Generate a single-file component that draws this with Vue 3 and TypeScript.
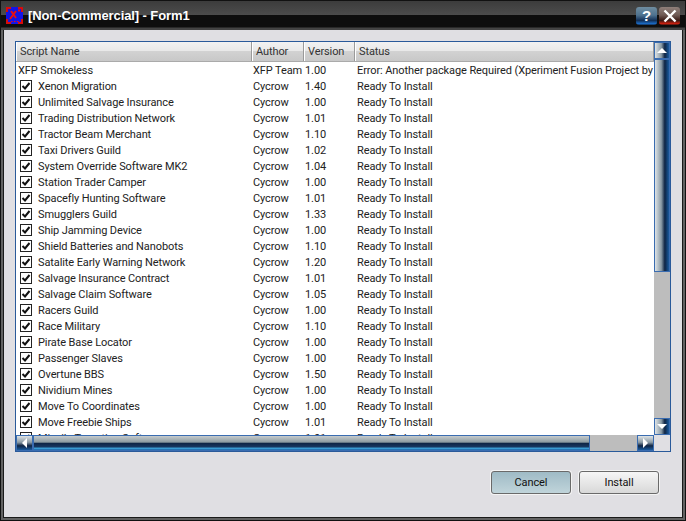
<script setup lang="ts">
interface Row { name: string; author: string; version: string; status: string; check: boolean }
const ready = 'Ready To Install'
const mk = (name: string, version: string): Row => ({ name, author: 'Cycrow', version, status: ready, check: true })
const rows: Row[] = [
  { name: 'XFP Smokeless', author: 'XFP Team', version: '1.00', status: 'Error: Another package Required (Xperiment Fusion Project by Zeron)', check: false },
  mk('Xenon Migration', '1.40'),
  mk('Unlimited Salvage Insurance', '1.00'),
  mk('Trading Distribution Network', '1.01'),
  mk('Tractor Beam Merchant', '1.10'),
  mk('Taxi Drivers Guild', '1.02'),
  mk('System Override Software MK2', '1.04'),
  mk('Station Trader Camper', '1.00'),
  mk('Spacefly Hunting Software', '1.01'),
  mk('Smugglers Guild', '1.33'),
  mk('Ship Jamming Device', '1.00'),
  mk('Shield Batteries and Nanobots', '1.10'),
  mk('Satalite Early Warning Network', '1.20'),
  mk('Salvage Insurance Contract', '1.01'),
  mk('Salvage Claim Software', '1.05'),
  mk('Racers Guild', '1.00'),
  mk('Race Military', '1.10'),
  mk('Pirate Base Locator', '1.00'),
  mk('Passenger Slaves', '1.00'),
  mk('Overtune BBS', '1.50'),
  mk('Nividium Mines', '1.00'),
  mk('Move To Coordinates', '1.00'),
  mk('Move Freebie Ships', '1.01'),
  mk('Missile Targeting Software', '1.01'),
]
</script>

<template>
  <div class="window">
    <header class="titlebar">
      <svg class="appicon" width="17" height="17" viewBox="0 0 17 17">
        <rect width="17" height="17" fill="#1414e6" />
        <path d="M0 0h5v2H2v3H0zM12 0h5v5h-2V2h-3zM0 12h2v3h3v2H0zM15 12h2v5h-5v-2h3z" fill="#d80c0c" />
        <path d="M4 12 L10 4 M5 4 L10 11" stroke="#e81010" stroke-width="2" fill="none" />
        <path d="M12 2.500h2v2h-2zM5 14h1.500v1H5zM8 14h1.500v1H8zM11 14h1.500v1H11z" fill="#e81010" />
      </svg>
      <span class="title">[Non-Commercial] - Form1</span>
      <span class="capbtn help">?</span>
      <span class="capbtn close">
        <svg width="14" height="14" viewBox="0 0 14 14"><path d="M1.500 1.500 L12.500 12.500 M12.500 1.500 L1.500 12.500" stroke="#fff" stroke-width="2.400" /></svg>
      </span>
    </header>
    <main class="client">
      <section class="list">
        <div class="viewport">
          <div class="head grid">
            <div class="hcell">Script Name</div>
            <div class="hcell">Author</div>
            <div class="hcell">Version</div>
            <div class="hcell">Status</div>
          </div>
          <div class="body">
            <div v-for="r in rows" :key="r.name" class="row grid">
              <div class="cell name" :class="{ nocheck: !r.check }">
                <svg v-if="r.check" class="check" width="12" height="12" viewBox="0 0 12 12">
                  <rect x=".5" y=".5" width="11" height="11" fill="#fff" stroke="#222" />
                  <path d="M2.500 6 L5 8.500 L9.500 3" fill="none" stroke="#111" stroke-width="2" />
                </svg>
                <span class="label">{{ r.name }}</span>
              </div>
              <div class="cell author">{{ r.author }}</div>
              <div class="cell version">{{ r.version }}</div>
              <div class="cell status">{{ r.status }}</div>
            </div>
          </div>
        </div>
        <div class="vbar">
          <div class="vbtn"><i class="arrow up"></i></div>
          <div class="vthumb"></div>
          <div class="vtrack"></div>
          <div class="vbtn"><i class="arrow down"></i></div>
        </div>
        <div class="hbar">
          <div class="hbtn"><i class="arrow left"></i></div>
          <div class="hthumb"></div>
          <div class="htrack"></div>
          <div class="hbtn"><i class="arrow right"></i></div>
        </div>
        <div class="corner"></div>
      </section>
      <footer class="actions">
        <button class="btn cancel">Cancel</button>
        <button class="btn">Install</button>
      </footer>
    </main>
  </div>
</template>

<style>
html, body { margin: 0; background: #000; }
</style>

<style scoped>
.window {
  width: 686px;
  height: 521px;
  box-sizing: border-box;
  display: flex;
  flex-direction: column;
  font-family: Roboto, "Liberation Sans", Arial, sans-serif;
  font-size: 11px;
  letter-spacing: -0.1px;
  color: #222;
  background: #1a1a1a;
  border: 1px solid #111;
  box-shadow: inset 0 0 0 2px #626262;
  overflow: hidden;
}
.titlebar {
  height: 29px;
  flex: none;
  display: flex;
  align-items: center;
  padding: 0 5px 0 5px;
  background: linear-gradient(#3c3c3c 0, #4c4c4c 14px, #0e0e0e 14px, #0e0e0e 26px, #444 27px);
}
.appicon { margin-right: 5px; }
.title {
  flex: 1;
  color: #fff;
  font-family: "Liberation Sans", Arial, sans-serif;
  font-weight: 700;
  font-size: 13px;
  letter-spacing: -0.1px;
}
.capbtn {
  width: 21px;
  height: 18px;
  display: flex;
  align-items: center;
  justify-content: center;
  border-radius: 3px;
  margin-left: 2px;
  color: #fff;
  font-family: "Liberation Sans", Arial, sans-serif;
  font-weight: 700;
  font-size: 15px;
}
.help { background: linear-gradient(#6f8da0, #4f7390 45%, #123058 75%, #1a68c0 92%, #123058); }
.close { background: linear-gradient(#8f7f7a, #6f5a54 45%, #3a1a14 75%, #c82010 92%, #401810); }
.client {
  flex: 1;
  margin: 0 3px 3px;
  background: #e0dfe3;
  padding: 11px 11px 0;
  display: flex;
  flex-direction: column;
}
.list {
  height: 411px;
  box-sizing: border-box;
  border: 1px solid #2a5a9a;
  display: grid;
  grid-template-columns: 1fr 16px;
  grid-template-rows: 1fr 16px;
  background: #fff;
}
.viewport { overflow: hidden; min-width: 0; min-height: 0; }
.grid { display: grid; grid-template-columns: 236px 52px 51px 1fr; }
.head {
  height: 19px;
  background: linear-gradient(#f2f2f2, #e8e8e8 50%, #d2d2d2 50%, #c8c8c8);
  border-bottom: 1px solid #aaa;
}
.hcell {
  height: 19px;
  line-height: 20px;
  padding-left: 4px;
  color: #333;
  border-right: 1px solid #9a9a9a;
  box-shadow: inset 1px 0 0 #fff;
}
.row { height: 16px; line-height: 16px; }
.cell { white-space: nowrap; overflow: hidden; }
.name { display: flex; align-items: center; padding-left: 4px; }
.name.nocheck { padding-left: 2px; }
.label { padding-top: 2px; }
.check { margin-right: 6px; flex: none; }
.author, .version { padding-left: 1px; padding-top: 1px; height: 15px; }
.status { padding-left: 2px; padding-top: 1px; height: 15px; }
.vbar { grid-row: 1; grid-column: 2; display: flex; flex-direction: column; background: #bdbdbd; }
.vbtn, .hbtn {
  flex: none;
  box-sizing: border-box;
  display: flex;
  align-items: center;
  justify-content: center;
  border: 1px solid #3a6cb0;
}
.vbtn { height: 17px; background: linear-gradient(90deg, #dfe4e6, #8a9aa5 45%, #0e2444 70%, #1a5a9c); }
.hbtn { width: 17px; background: linear-gradient(#dfe4e6, #8a9aa5 45%, #0e2444 70%, #1a5a9c); }
.vthumb {
  height: 213px;
  flex: none;
  box-sizing: border-box;
  border: 1px solid #3a6cb0;
  background: linear-gradient(90deg, #dfe4e6, #8a9aa5 45%, #0e2444 70%, #1a5a9c);
}
.vtrack, .htrack { flex: 1; background: #bdbdbd; }
.hbar { grid-row: 2; grid-column: 1; display: flex; background: #bdbdbd; }
.hthumb {
  width: 557px;
  flex: none;
  box-sizing: border-box;
  border: 1px solid #3a6cb0;
  background: linear-gradient(#c6cbcc, #8a9aa0 45%, #0e2444 50%, #16365e 75%, #3aa0d8 90%, #1a5a9c);
}
.corner { background: #e0dfe3; }
.arrow { width: 0; height: 0; border: 4px solid transparent; display: block; }
.arrow.up { border-top: 0; border-bottom: 5px solid #fff; border-left-width: 5px; border-right-width: 5px; }
.arrow.down { border-bottom: 0; border-top: 5px solid #fff; border-left-width: 5px; border-right-width: 5px; }
.arrow.left { border-left: 0; border-right: 5px solid #fff; border-top-width: 5px; border-bottom-width: 5px; }
.arrow.right { border-right: 0; border-left: 5px solid #fff; border-top-width: 5px; border-bottom-width: 5px; }
.actions {
  display: flex;
  justify-content: flex-end;
  gap: 8px;
  margin-top: 19px;
  padding-right: 12px;
}
.btn {
  width: 80px;
  height: 23px;
  box-sizing: border-box;
  padding: 0;
  border: 1px solid #6a6a6a;
  border-radius: 3px;
  background: linear-gradient(#f6f6f6, #d8d8d8);
  box-shadow: 0 0 0 1px #f4f4f4;
  font: inherit;
  letter-spacing: inherit;
  color: #111;
}
.btn.cancel { background: linear-gradient(#9fbbc6, #c0d4da); }
</style>
